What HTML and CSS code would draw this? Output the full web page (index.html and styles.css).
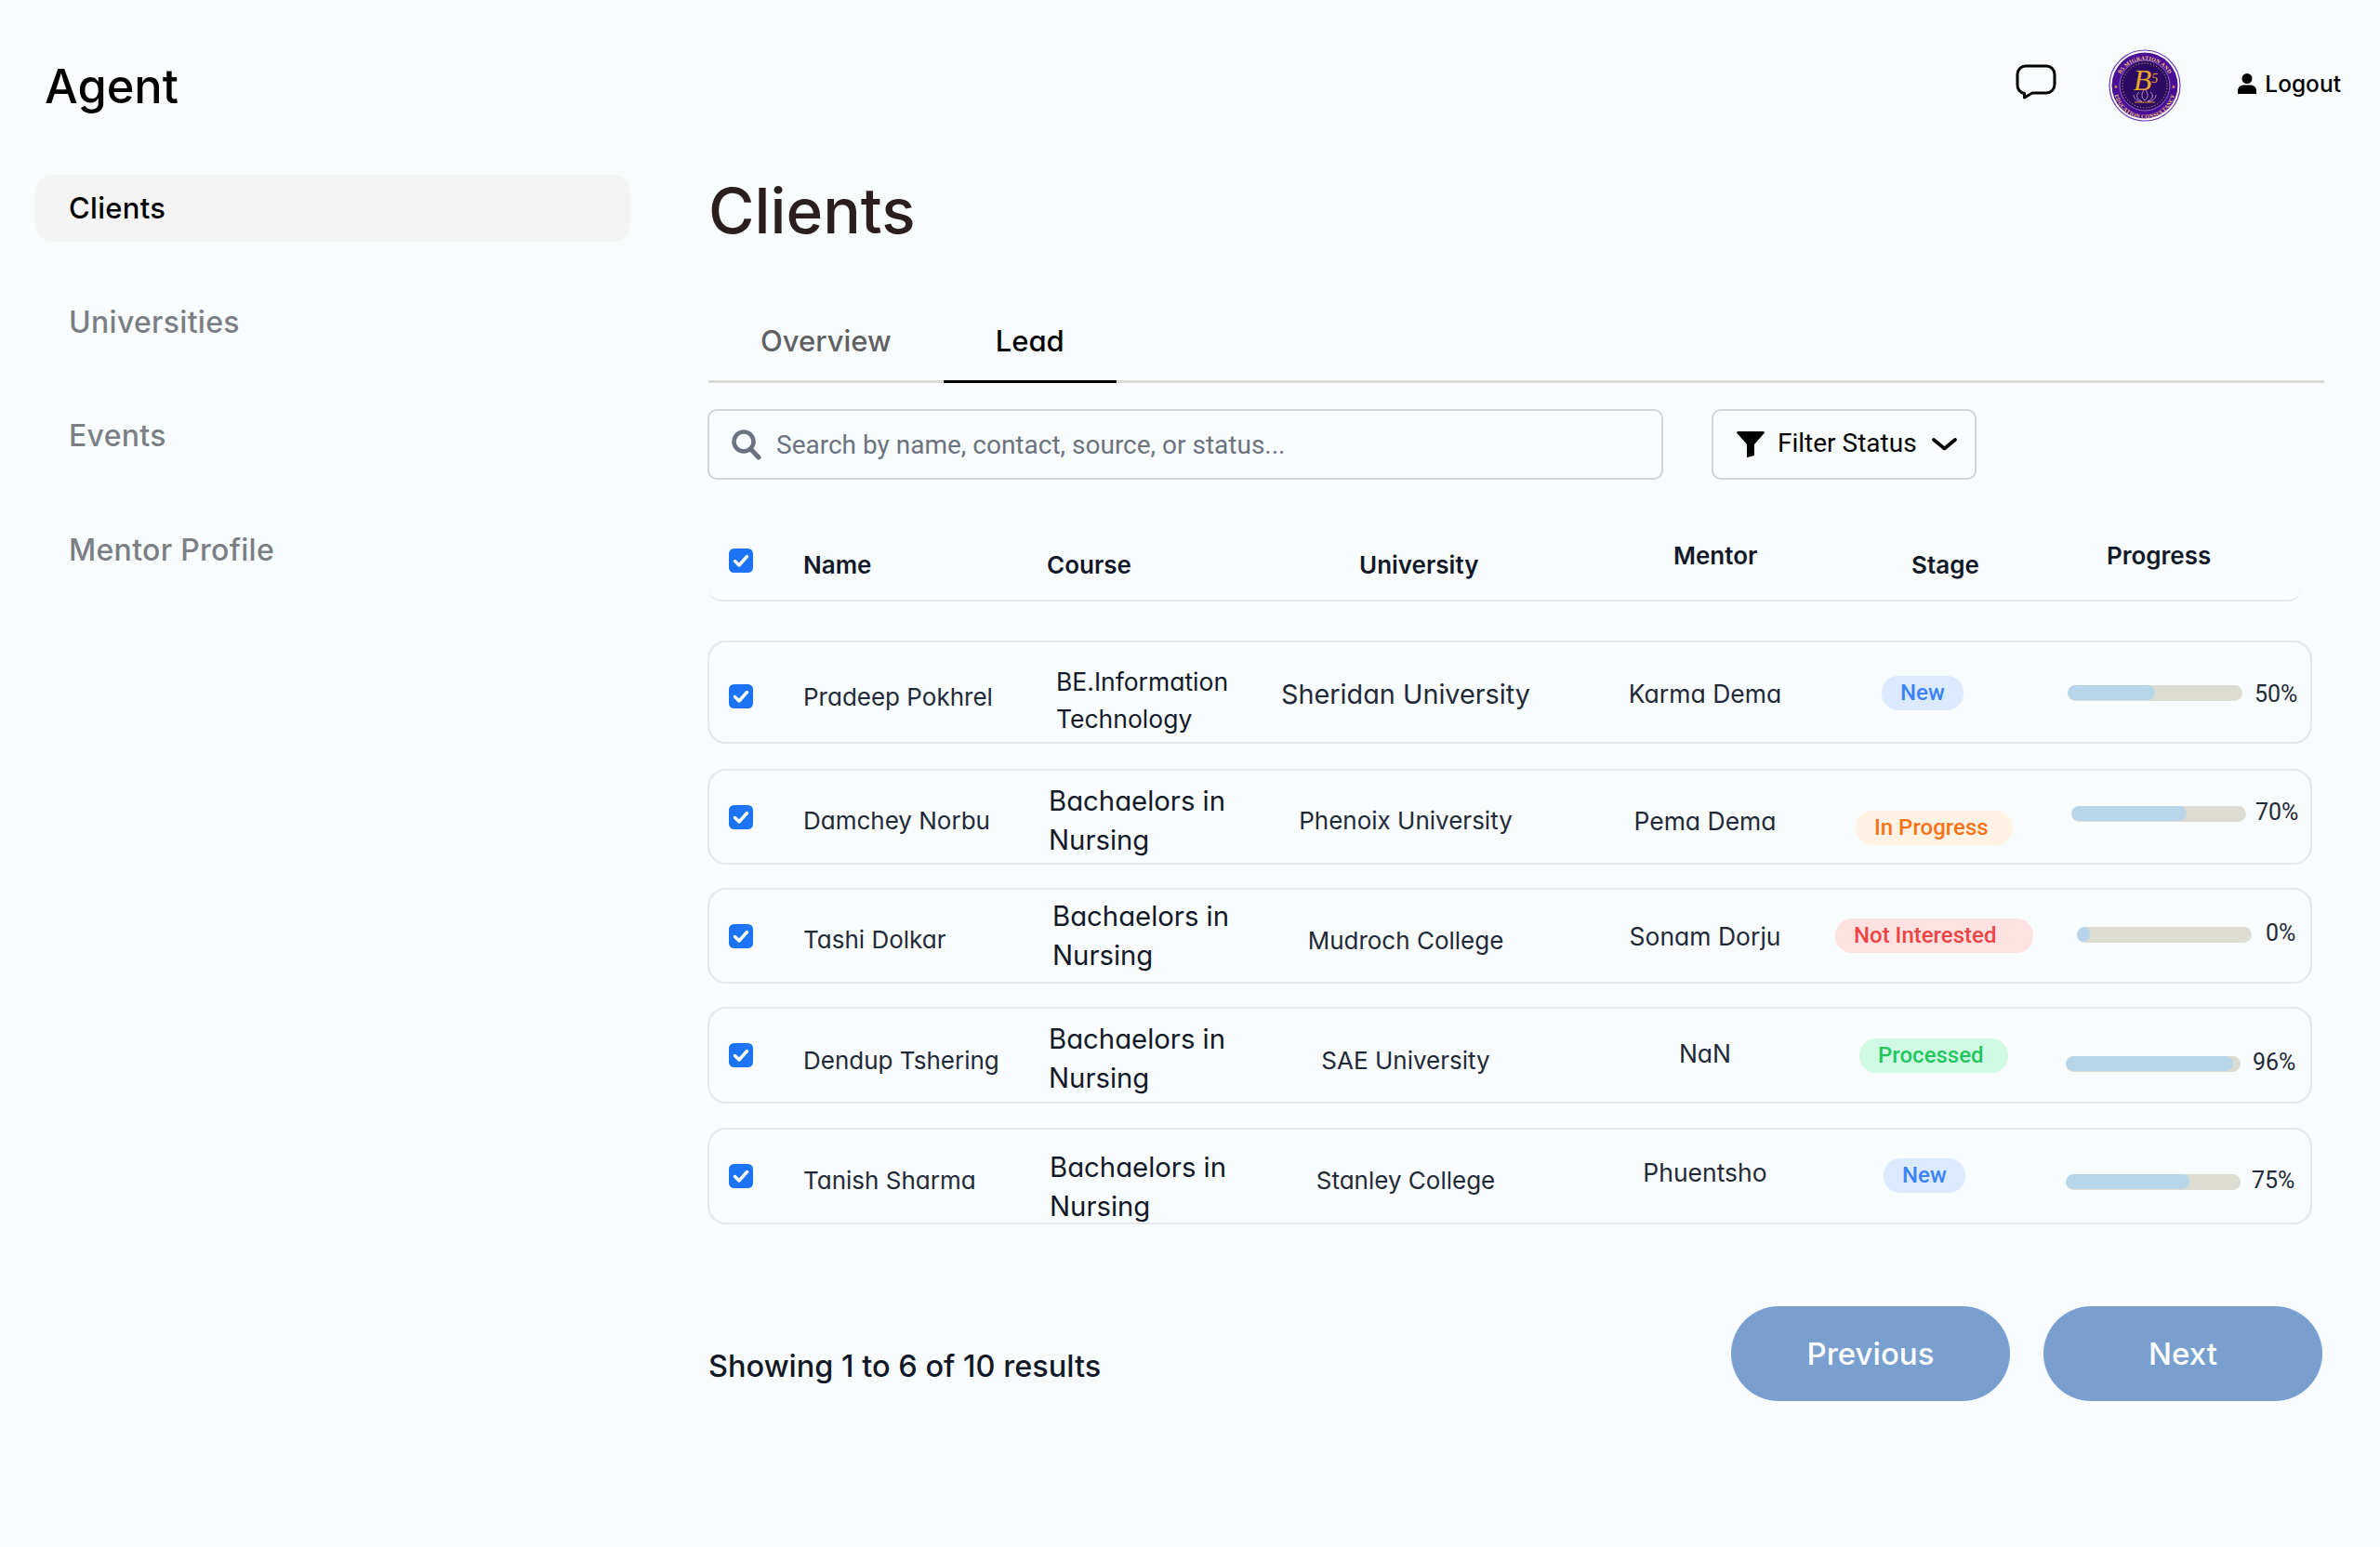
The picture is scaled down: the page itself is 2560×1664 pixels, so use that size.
FILE: index.html
```html
<!DOCTYPE html>
<html lang="en">
<head>
<meta charset="utf-8">
<title>Agent - Clients</title>
<link rel="stylesheet" href="styles.css">
</head>
<body>
<header class="topbar">
  <div class="brand">Agent</div>
  <div class="tools">
    <svg class="chat" viewBox="0 0 44 39" width="44" height="39"><path d="M11 2H33a9 9 0 0 1 9 9V22a9 9 0 0 1-9 9H18L9.500 36V31.500A9 9 0 0 1 2 22V11a9 9 0 0 1 9-9Z" fill="none" stroke="#000" stroke-width="3" stroke-linejoin="round"/></svg>
    <svg class="avatar" viewBox="0 0 78 78" width="78" height="78">
      <defs>
        <path id="arcTop" d="M9.500 41a29.500 29.500 0 0 1 59 0"/>
        <path id="arcBottom" d="M5.500 41a33.500 33.500 0 0 0 67 0"/>
      </defs>
      <circle cx="39" cy="39" r="38" fill="#fff" stroke="#6b35b5" stroke-width="1.200"/>
      <circle cx="39" cy="39" r="35.500" fill="#4a0d96"/>
      <circle cx="39" cy="39" r="27" fill="#2c0a63" stroke="#a884d8" stroke-width=".8"/>
      <circle cx="39" cy="39" r="24" fill="none" stroke="#e6c27a" stroke-width="1" stroke-dasharray="1 2.200"/>
      <text class="logo-ring" fill="#f0c878"><textPath href="#arcTop" startOffset="50%" text-anchor="middle">B5 MIGRATION AND</textPath></text>
      <text class="logo-ring" fill="#f0c878"><textPath href="#arcBottom" startOffset="50%" text-anchor="middle">EDUCATION CONSULTANCY</textPath></text>
      <text class="logo-b5" x="40" y="44" text-anchor="middle" fill="#e9a525">B<tspan class="logo-five" dy="-8">5</tspan></text>
      <path d="M39 43c-4 4-4 9 0 12c4-3 4-8 0-12ZM33 46c-4 3-3 8 3 10M45 46c4 3 3 8-3 10M27 49c0 4 4 7 9 7.500M51 49c0 4-4 7-9 7.500" fill="none" stroke="#c99ad0" stroke-width=".9"/>
      <path d="M28 57h22" stroke="#e9a525" stroke-width=".9"/>
      <text class="logo-star" x="5.500" y="41.500" fill="#f0b040">★</text>
      <text class="logo-star" x="67.500" y="41.500" fill="#f0b040">★</text>
    </svg>
    <div class="logout">
      <svg viewBox="0 0 20 22" width="20" height="22"><circle cx="10" cy="5.500" r="5.500"/><path d="M0 22v-3.500C0 14.500 3.500 12.500 6.500 12.500h7c3 0 6.500 2 6.500 6V22Z"/></svg>
      <span>Logout</span>
    </div>
  </div>
</header>

<div class="layout">
  <nav class="sidebar">
    <a class="nav-item is-active">Clients</a>
    <a class="nav-item">Universities</a>
    <a class="nav-item">Events</a>
    <a class="nav-item">Mentor Profile</a>
  </nav>

  <main class="content">
    <h1 class="title">Clients</h1>

    <div class="tabs">
      <a class="tab">Overview</a>
      <a class="tab is-active">Lead</a>
    </div>

    <div class="toolbar">
      <label class="search">
        <svg viewBox="0 0 32 33" width="32" height="33"><circle cx="13" cy="13" r="10.500" fill="none" stroke="#6b7280" stroke-width="4.500"/><path d="M20.500 21L29 30" stroke="#6b7280" stroke-width="5" stroke-linecap="round"/></svg>
        <input class="search-input" type="text" placeholder="Search by name, contact, source, or status...">
      </label>
      <button class="filter" type="button">
        <svg viewBox="0 0 30 28" width="30" height="28"><path d="M0 1.500Q0 0 1.500 0H28.500Q30 0 30 1.500L19 14V26L11 28V14Z" fill="#000"/></svg>
        <span>Filter Status</span>
        <svg class="chev" viewBox="0 0 27 14" width="27" height="14"><path d="M2 2L13.500 11.500L25 2" fill="none" stroke="#000" stroke-width="3.600" stroke-linecap="round" stroke-linejoin="round"/></svg>
      </button>
    </div>

    <div class="table-head">
      <span class="hcell hc-check"><svg class="check" viewBox="0 0 26 26" width="26" height="26"><rect width="26" height="26" rx="5.500" fill="#1c74f5"/><path d="M6.500 13.500L11 18L19.500 8.500" fill="none" stroke="#fff" stroke-width="3.400" stroke-linecap="round" stroke-linejoin="round"/></svg></span>
      <span class="hcell hc-name">Name</span>
      <span class="hcell hc-course">Course</span>
      <span class="hcell hc-uni">University</span>
      <span class="hcell hc-mentor">Mentor</span>
      <span class="hcell hc-stage">Stage</span>
      <span class="hcell hc-progress">Progress</span>
    </div>

    <div class="rows">
      <div class="row row-1">
        <span class="cell c-check"><svg class="check" viewBox="0 0 26 26" width="26" height="26"><rect width="26" height="26" rx="5.500" fill="#1c74f5"/><path d="M6.500 13.500L11 18L19.500 8.500" fill="none" stroke="#fff" stroke-width="3.400" stroke-linecap="round" stroke-linejoin="round"/></svg></span>
        <span class="cell c-name">Pradeep Pokhrel</span>
        <span class="cell c-course">BE.Information Technology</span>
        <span class="cell c-uni">Sheridan University</span>
        <span class="cell c-mentor">Karma Dema</span>
        <span class="cell c-stage"><span class="badge badge-new">New</span></span>
        <span class="cell c-progress"><span class="track"><span class="fill" style="width:50%"></span></span><span class="pct">50%</span></span>
      </div>
      <div class="row row-2">
        <span class="cell c-check"><svg class="check" viewBox="0 0 26 26" width="26" height="26"><rect width="26" height="26" rx="5.500" fill="#1c74f5"/><path d="M6.500 13.500L11 18L19.500 8.500" fill="none" stroke="#fff" stroke-width="3.400" stroke-linecap="round" stroke-linejoin="round"/></svg></span>
        <span class="cell c-name">Damchey Norbu</span>
        <span class="cell c-course">Bachaelors in Nursing</span>
        <span class="cell c-uni">Phenoix University</span>
        <span class="cell c-mentor">Pema Dema</span>
        <span class="cell c-stage"><span class="badge badge-progress">In Progress</span></span>
        <span class="cell c-progress"><span class="track"><span class="fill" style="width:66%"></span></span><span class="pct">70%</span></span>
      </div>
      <div class="row row-3">
        <span class="cell c-check"><svg class="check" viewBox="0 0 26 26" width="26" height="26"><rect width="26" height="26" rx="5.500" fill="#1c74f5"/><path d="M6.500 13.500L11 18L19.500 8.500" fill="none" stroke="#fff" stroke-width="3.400" stroke-linecap="round" stroke-linejoin="round"/></svg></span>
        <span class="cell c-name">Tashi Dolkar</span>
        <span class="cell c-course">Bachaelors in Nursing</span>
        <span class="cell c-uni">Mudroch College</span>
        <span class="cell c-mentor">Sonam Dorju</span>
        <span class="cell c-stage"><span class="badge badge-no">Not Interested</span></span>
        <span class="cell c-progress"><span class="track"><span class="fill" style="width:7.500%"></span></span><span class="pct">0%</span></span>
      </div>
      <div class="row row-4">
        <span class="cell c-check"><svg class="check" viewBox="0 0 26 26" width="26" height="26"><rect width="26" height="26" rx="5.500" fill="#1c74f5"/><path d="M6.500 13.500L11 18L19.500 8.500" fill="none" stroke="#fff" stroke-width="3.400" stroke-linecap="round" stroke-linejoin="round"/></svg></span>
        <span class="cell c-name">Dendup Tshering</span>
        <span class="cell c-course">Bachaelors in Nursing</span>
        <span class="cell c-uni">SAE University</span>
        <span class="cell c-mentor">NaN</span>
        <span class="cell c-stage"><span class="badge badge-done">Processed</span></span>
        <span class="cell c-progress"><span class="track"><span class="fill" style="width:96%"></span></span><span class="pct">96%</span></span>
      </div>
      <div class="row row-5">
        <span class="cell c-check"><svg class="check" viewBox="0 0 26 26" width="26" height="26"><rect width="26" height="26" rx="5.500" fill="#1c74f5"/><path d="M6.500 13.500L11 18L19.500 8.500" fill="none" stroke="#fff" stroke-width="3.400" stroke-linecap="round" stroke-linejoin="round"/></svg></span>
        <span class="cell c-name">Tanish Sharma</span>
        <span class="cell c-course">Bachaelors in Nursing</span>
        <span class="cell c-uni">Stanley College</span>
        <span class="cell c-mentor">Phuentsho</span>
        <span class="cell c-stage"><span class="badge badge-new">New</span></span>
        <span class="cell c-progress"><span class="track"><span class="fill" style="width:71%"></span></span><span class="pct">75%</span></span>
      </div>
    </div>

    <footer class="pager">
      <p class="pager-info">Showing 1 to 6 of 10 results</p>
      <div class="pager-btns">
        <button class="pager-btn" type="button">Previous</button>
        <button class="pager-btn" type="button">Next</button>
      </div>
    </footer>
  </main>
</div>
</body>
</html>
```
FILE: styles.css
```css
* { box-sizing: border-box; }
html, body { margin: 0; padding: 0; }
body {
  width: 2560px;
  height: 1664px;
  overflow: hidden;
  background: #f9fcfd;
  color: #111827;
  font-family: Inter, "Liberation Sans", sans-serif;
  font-feature-settings: "cv11";
}

/* top bar */
.topbar {
  height: 188px;
  display: flex;
  justify-content: space-between;
  align-items: flex-start;
  padding: 0 42px 0 48px;
}
.brand {
  margin-top: 62px;
  font-size: 50.500px;
  line-height: 62px;
  font-weight: 500;
  color: #000;
}
.tools { display: flex; align-items: flex-start; }
.chat { margin-top: 69px; }
.avatar { margin: 53px 0 0 56px; }
.logo-ring { font-family: "Liberation Serif", serif; font-size: 6px; font-weight: 700; letter-spacing: .25px; }
.logo-b5 { font-family: "Liberation Serif", serif; font-style: italic; font-size: 32px; }
.logo-five { font-size: 14px; }
.logo-star { font-size: 5px; font-family: "DejaVu Sans", sans-serif; }
.logout {
  margin: 75px 0 0 61px;
  display: flex;
  align-items: center;
  gap: 9px;
  height: 30px;
  font-size: 24.500px;
  font-weight: 500;
  color: #000;
}

/* layout */
.layout { display: flex; align-items: flex-start; }
.sidebar {
  width: 640px;
  margin: 0 83px 0 38px;
  display: flex;
  flex-direction: column;
  gap: 50.500px;
}
.nav-item {
  height: 72px;
  line-height: 72px;
  padding-left: 36px;
  border-radius: 18px;
  font-size: 32px;
  letter-spacing: .3px;
  font-weight: 500;
  color: #7b7f85;
}
.nav-item.is-active { background: #f4f4f4; color: #000; font-size: 31px; }

.content { width: 1739px; display: flex; flex-direction: column; }

.title {
  margin: 0 0 0 1px;
  font-size: 67.500px;
  line-height: 78px;
  font-weight: 500;
  color: #2a1e1e;
}

/* tabs */
.tabs {
  margin: 81px 0 0 1px;
  display: flex;
  border-bottom: 3px solid #dcdbd6;
}
.tab {
  padding: 0 56px 22px;
  margin-bottom: -3px;
  border-bottom: 3px solid transparent;
  font-size: 31px;
  line-height: 40px;
  font-weight: 500;
  color: #5f6062;
}
.tab.is-active { color: #000; border-bottom-color: #000; }

/* toolbar */
.toolbar { margin-top: 28px; display: flex; gap: 52px; }
.search {
  width: 1028px;
  height: 76px;
  display: flex;
  align-items: center;
  gap: 16px;
  padding-left: 24px;
  border: 2px solid #d1d5db;
  border-radius: 10px;
}
.search-input {
  flex: 1;
  border: 0;
  outline: 0;
  padding: 0;
  background: transparent;
  font-family: Roboto, sans-serif;
  font-size: 28px;
  color: #6b7280;
}
.search-input::placeholder { color: #6b7280; opacity: 1; }
.filter {
  width: 285px;
  height: 76px;
  display: flex;
  align-items: center;
  padding: 0 0 0 25px;
  background: transparent;
  border: 2px solid #d1d5db;
  border-radius: 10px;
  font-family: Roboto, sans-serif;
  font-size: 28px;
  color: #000;
}
.filter span { margin: 0 16px 3px 14px; }

/* table head */
.table-head {
  width: 1713px;
  height: 131px;
  margin-left: 1px;
  display: grid;
  grid-template-columns: 101px 262px 246px 280px 308px 260px 1fr;
  border-bottom: 2px solid #e5e7eb;
  border-radius: 0 0 14px 14px;
  font-size: 26px;
  font-weight: 600;
  font-feature-settings: normal;
  line-height: 40px;
  color: #111827;
}
.hcell { display: block; }
.hc-check { padding: 74px 0 0 22px; }
.hc-name, .hc-course, .hc-uni, .hc-stage { padding-top: 72px; }
.hc-name { padding-left: 1px; }
.hc-course { padding-left: 1px; }
.hc-uni { padding-left: 91px; }
.hc-mentor { padding: 62px 0 0 149px; }
.hc-stage { padding-left: 97px; }
.hc-progress { padding: 62px 0 0 47px; }

/* rows */
.rows { margin-top: 42px; width: 1726px; }
.row {
  display: grid;
  grid-template-columns: 101px 262px 246px 280px 308px 260px 1fr;
  align-items: start;
  border: 2px solid #e5e7eb;
  border-radius: 20px;
  font-size: 26px;
  line-height: 40px;
  color: #1f2937;
}
.cell { display: block; }
.c-check { padding-left: 21px; height: 26px; }
.check { display: block; }
.c-course { line-height: 41.500px; color: #111827; font-size: 29.300px; width: 245px; }
.c-uni { text-align: center; }
.c-mentor { padding-left: 56px; text-align: center; font-size: 26.500px; }
.c-stage { display: flex; align-items: flex-start; }
.badge {
  height: 36.500px;
  line-height: 36px;
  padding: 0 20px;
  border-radius: 18px;
  font-family: Roboto, sans-serif;
  font-size: 24px;
  font-weight: 500;
  white-space: nowrap;
}
.badge-new { background: #dbeafe; color: #3b82f6; }
.badge-progress { background: #fff3e6; color: #f97316; padding-right: 26px; }
.badge-no { background: #fee2e2; color: #ef4444; padding-right: 40px; }
.badge-done { background: #d1fae5; color: #22c55e; padding-right: 26px; }
.c-progress { display: flex; align-items: center; }
.track {
  display: block;
  width: 188px;
  height: 17px;
  flex: none;
  border-radius: 9px;
  background: #dddcd3;
  overflow: hidden;
}
.fill { display: block; height: 16px; border-radius: 9px; background: #b8d6ea; }
.pct { font-family: Roboto, sans-serif; font-size: 25px; line-height: 28px; color: #1f2937; white-space: nowrap; }

/* per-row offsets, measured from the design (row top is at border inner edge) */
.row-1 { height: 111px; margin-bottom: 27px; }
.row-1 .c-check { margin-top: 45px; }
.row-1 .c-name { margin-top: 39px; }
.row-1 .c-course { margin: 22px 0 0 10px; font-size: 26.500px; line-height: 40px; width: 240px; }
.row-1 .c-uni { margin-top: 36px; font-size: 28.800px; }
.row-1 .c-mentor { margin-top: 35px; }
.row-1 .c-stage { margin: 36px 0 0 64px; }
.row-1 .c-progress { margin: 34px 0 0 4px; height: 40px; }
.row-1 .pct { margin: 3px 0 0 13px; }

.row-2 { height: 103px; margin-bottom: 25px; }
.row-2 .c-check { margin-top: 37px; }
.row-2 .c-name { margin-top: 34px; }
.row-2 .c-course { margin: 12px 0 0 2px; }
.row-2 .c-uni { margin-top: 34px; }
.row-2 .c-mentor { margin-top: 34px; }
.row-2 .c-stage { margin: 43px 0 0 36px; }
.row-2 .c-progress { margin: 26px 0 0 8px; height: 40px; }
.row-2 .pct { margin: 0 0 3px 10px; }

.row-3 { height: 103px; margin-bottom: 25px; }
.row-3 .c-check { margin-top: 37px; }
.row-3 .c-name { margin-top: 34px; }
.row-3 .c-course { margin: 8px 0 0 6px; }
.row-3 .c-uni { margin-top: 35px; }
.row-3 .c-mentor { margin-top: 30px; }
.row-3 .c-stage { margin: 31px 0 0 14px; }
.row-3 .c-progress { margin: 28px 0 0 14px; height: 40px; }
.row-3 .pct { margin: 0 0 3px 15px; }

.row-4 { height: 104px; margin-bottom: 26px; }
.row-4 .c-check { margin-top: 37px; }
.row-4 .c-name { margin-top: 36px; }
.row-4 .c-course { margin: 12px 0 0 2px; }
.row-4 .c-uni { margin-top: 36px; }
.row-4 .c-mentor { margin-top: 28px; }
.row-4 .c-stage { margin: 32px 0 0 40px; }
.row-4 .c-progress { margin: 39px 0 0 2px; height: 40px; }
.row-4 .pct { margin: 0 0 3px 13px; }

.row-5 { height: 104px; }
.row-5 .c-check { margin-top: 37px; }
.row-5 .c-name { margin-top: 35px; }
.row-5 .c-course { margin: 20px 0 0 3px; }
.row-5 .c-uni { margin-top: 35px; }
.row-5 .c-mentor { margin-top: 26px; }
.row-5 .c-stage { margin: 31px 0 0 66px; }
.row-5 .c-progress { margin: 36px 0 0 2px; height: 40px; }
.row-5 .pct { margin: 0 0 3px 12px; }

/* pager */
.pager {
  margin-top: 88px;
  display: flex;
  justify-content: space-between;
  align-items: flex-start;
  padding: 0 2px 0 1px;
}
.pager-info {
  margin: 44px 0 0;
  font-size: 32.500px;
  line-height: 42px;
  font-weight: 500;
  color: #111827;
}
.pager-btns { display: flex; gap: 36px; }
.pager-btn {
  width: 300px;
  height: 102px;
  padding: 0;
  border: 0;
  border-radius: 51px;
  background: #789fce;
  color: #fff;
  font-family: Inter, sans-serif;
  font-size: 33px;
  font-weight: 500;
}
```
